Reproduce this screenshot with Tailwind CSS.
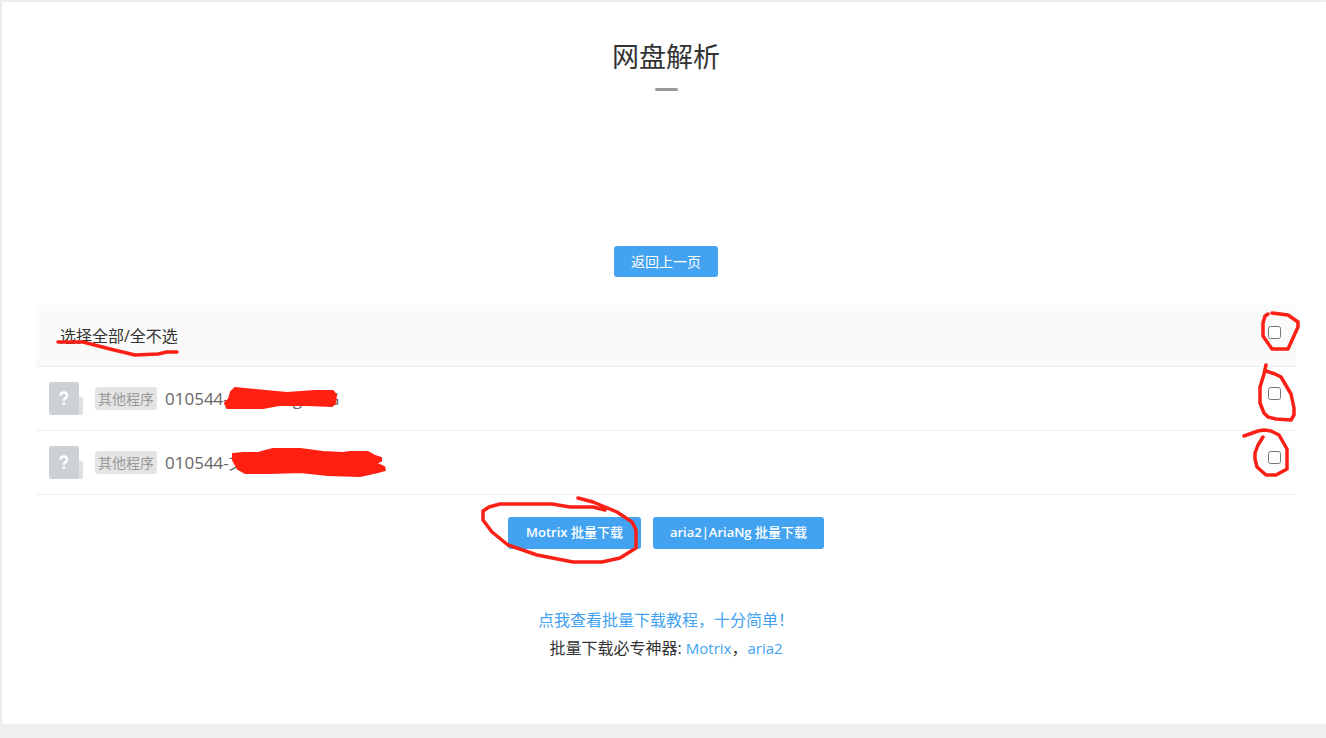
<!doctype html>
<html lang="zh-CN">
  <head>
    <meta charset="utf-8" />
    <meta name="viewport" content="width=device-width, initial-scale=1" />
    <title>网盘解析</title>
    <script src="https://cdn.jsdelivr.net/npm/@tailwindcss/browser@4"></script>
  </head>
  <body class="bg-[#efefef] text-base text-[#333] font-['Open_Sans','Noto_Sans_CJK_SC',sans-serif]">
    <main class="mt-[2px] ml-[2px] bg-white pt-[35px] pr-[30px] pb-[62px] pl-[34px] shadow-[0_0_2px_#ddd]">
      <!-- Title -->
      <header class="flex flex-col items-center gap-[11px]">
        <h1 class="text-[27px] leading-10">网盘解析</h1>
        <div class="h-[3px] w-[23px] rounded-sm bg-[#999]"></div>
      </header>

      <div class="mt-[155px] flex justify-center">
        <button type="button" class="h-[31px] rounded-[3px] bg-[#43a3f1] px-[17px] text-sm text-white">返回上一页</button>
      </div>

      <!-- File list -->
      <ul class="mt-7">
        <li class="relative flex h-[62px] items-center justify-between border-b border-[#eee] bg-[#fafafa] pr-[15px] pl-6">
          <label for="all">选择全部/全不选</label>
          <input type="checkbox" id="all" class="mt-[21px] size-[13px] self-start" />
          <svg class="absolute top-[31px] left-[17px] h-[24px] w-[130px]" viewBox="53 336 130 24" fill="none" stroke="#fb2016" stroke-width="3.500" stroke-linecap="round" stroke-linejoin="round">
            <path d="M58 342H83L110 349L135 355L158 354L167 352H177" />
          </svg>
          <svg class="pointer-events-none absolute top-[3px] right-[-6px] h-[46px] w-[46px]" viewBox="1256 308 46 46" fill="none" stroke="#fb2016" stroke-width="3.500" stroke-linecap="round" stroke-linejoin="round">
            <path d="M1272 313L1288 315L1298 322V327L1288 349H1272L1263 336V323L1265 316L1268 314" />
          </svg>
        </li>
        <li class="relative flex h-16 items-center border-b border-[#eee] pr-[15px] pl-[13px]">
          <svg class="h-[33px] w-[34px] shrink-0" viewBox="0 0 34 33">
            <rect x="24" y="15" width="10" height="18" rx="2" fill="#dfe0e2" />
            <rect width="30" height="33" rx="2" fill="#cdd0d4" />
            <path d="M11.500 13.500C11.500 9.500 18 9.500 18 13.500C18 16 14.800 16 14.800 19" fill="none" stroke="#fff" stroke-width="2.500" />
            <rect x="13.500" y="20.500" width="2.600" height="2.600" fill="#fff" />
          </svg>
          <span class="ml-3 rounded-[3px] bg-[#e4e4e4] px-[3px] text-sm leading-[23px] text-[#999]">其他程序</span>
          <label for="file1" class="ml-2 flex text-[17px] text-[#666]">010544-<span class="ml-[64px]">g</span><span class="ml-[25px]">G</span></label>
          <input type="checkbox" id="file1" class="mt-5 ml-auto size-[13px] self-start" />
          <svg class="absolute top-[17px] left-[184px] h-[30px] w-[125px]" viewBox="220 384 125 30" fill="#ff2012" stroke="#ff2012" stroke-width="2" stroke-linejoin="round">
            <path d="M231 392L235 388L255 390L287 393L315 391H333L336 395L335 403L332 406L307 405H279L263 408H227L225 403L229 399Z" />
          </svg>
          <svg class="pointer-events-none absolute top-[-7px] right-[-4px] h-[65px] w-[44px]" viewBox="1256 360 44 65" fill="none" stroke="#fb2016" stroke-width="3.500" stroke-linecap="round" stroke-linejoin="round">
            <path d="M1266 365L1264 374L1260 387V403L1264 413L1268 417L1276 419L1291 420L1294 415V408L1291 394L1281 377L1275 374L1266 371" />
          </svg>
        </li>
        <li class="relative flex h-16 items-center border-b border-[#eee] pr-[15px] pl-[13px]">
          <svg class="h-[33px] w-[34px] shrink-0" viewBox="0 0 34 33">
            <rect x="24" y="15" width="10" height="18" rx="2" fill="#dfe0e2" />
            <rect width="30" height="33" rx="2" fill="#cdd0d4" />
            <path d="M11.500 13.500C11.500 9.500 18 9.500 18 13.500C18 16 14.800 16 14.800 19" fill="none" stroke="#fff" stroke-width="2.500" />
            <rect x="13.500" y="20.500" width="2.600" height="2.600" fill="#fff" />
          </svg>
          <span class="ml-3 rounded-[3px] bg-[#e4e4e4] px-[3px] text-sm leading-[23px] text-[#999]">其他程序</span>
          <label for="file2" class="ml-2 text-[17px] text-[#666]">010544-文</label>
          <input type="checkbox" id="file2" class="mt-5 ml-auto size-[13px] self-start" />
          <svg class="absolute top-[13px] left-[190px] h-[38px] w-[165px]" viewBox="226 444 165 38" fill="#ff2012" stroke="#ff2012" stroke-width="2" stroke-linejoin="round">
            <path d="M233 454L243 453H258L273 449H300L323 452L343 453L350 452H368L375 456L381 458V461L375 463L384 467L385 470L378 472L360 476L328 475L300 472L270 473H245L238 469L233 460Z" />
          </svg>
          <svg class="pointer-events-none absolute top-[-6px] right-0 h-[55px] w-[56px]" viewBox="1240 425 56 55" fill="none" stroke="#fb2016" stroke-width="3.500" stroke-linecap="round" stroke-linejoin="round">
            <path d="M1244 436L1258 431L1264 430L1271 431L1279 435L1287 449V469L1276 475H1266L1257 467L1255 459V453L1258 445L1263 437" />
          </svg>
        </li>
      </ul>

      <!-- Batch download -->
      <div class="mt-[22px] flex justify-center gap-3">
        <div class="relative">
          <button type="button" class="h-8 rounded-[3px] bg-[#43a3f1] px-[18px] text-[13px] font-semibold text-white">Motrix <span class="font-medium">批量下载</span></button>
          <svg class="pointer-events-none absolute top-[-24px] left-[-30px] h-[75px] w-[170px]" viewBox="478 493 170 75" fill="none" stroke="#fb2016" stroke-width="3.500" stroke-linecap="round" stroke-linejoin="round">
            <path d="M578 498L593 502L617 512L632 522L636 530V548L620 558L602 562H573L537 555L508 545L492 532L483 520V511L489 507L500 504H552L570 507L593 507L605 510" />
          </svg>
        </div>
        <button type="button" class="h-8 rounded-[3px] bg-[#43a3f1] px-[17px] text-[13px] font-semibold text-white">aria2|AriaNg <span class="font-medium">批量下载</span></button>
      </div>

      <div class="mt-[57px] text-center leading-7">
        <p><a href="#" class="text-[#43a3f1]">点我查看批量下载教程，十分简单！</a></p>
        <p>批量下载必专神器: <a href="#" class="text-[15px] text-[#43a3f1]">Motrix</a>，<a href="#" class="text-[15px] text-[#43a3f1]">aria2</a></p>
      </div>
    </main>
  </body>
</html>
